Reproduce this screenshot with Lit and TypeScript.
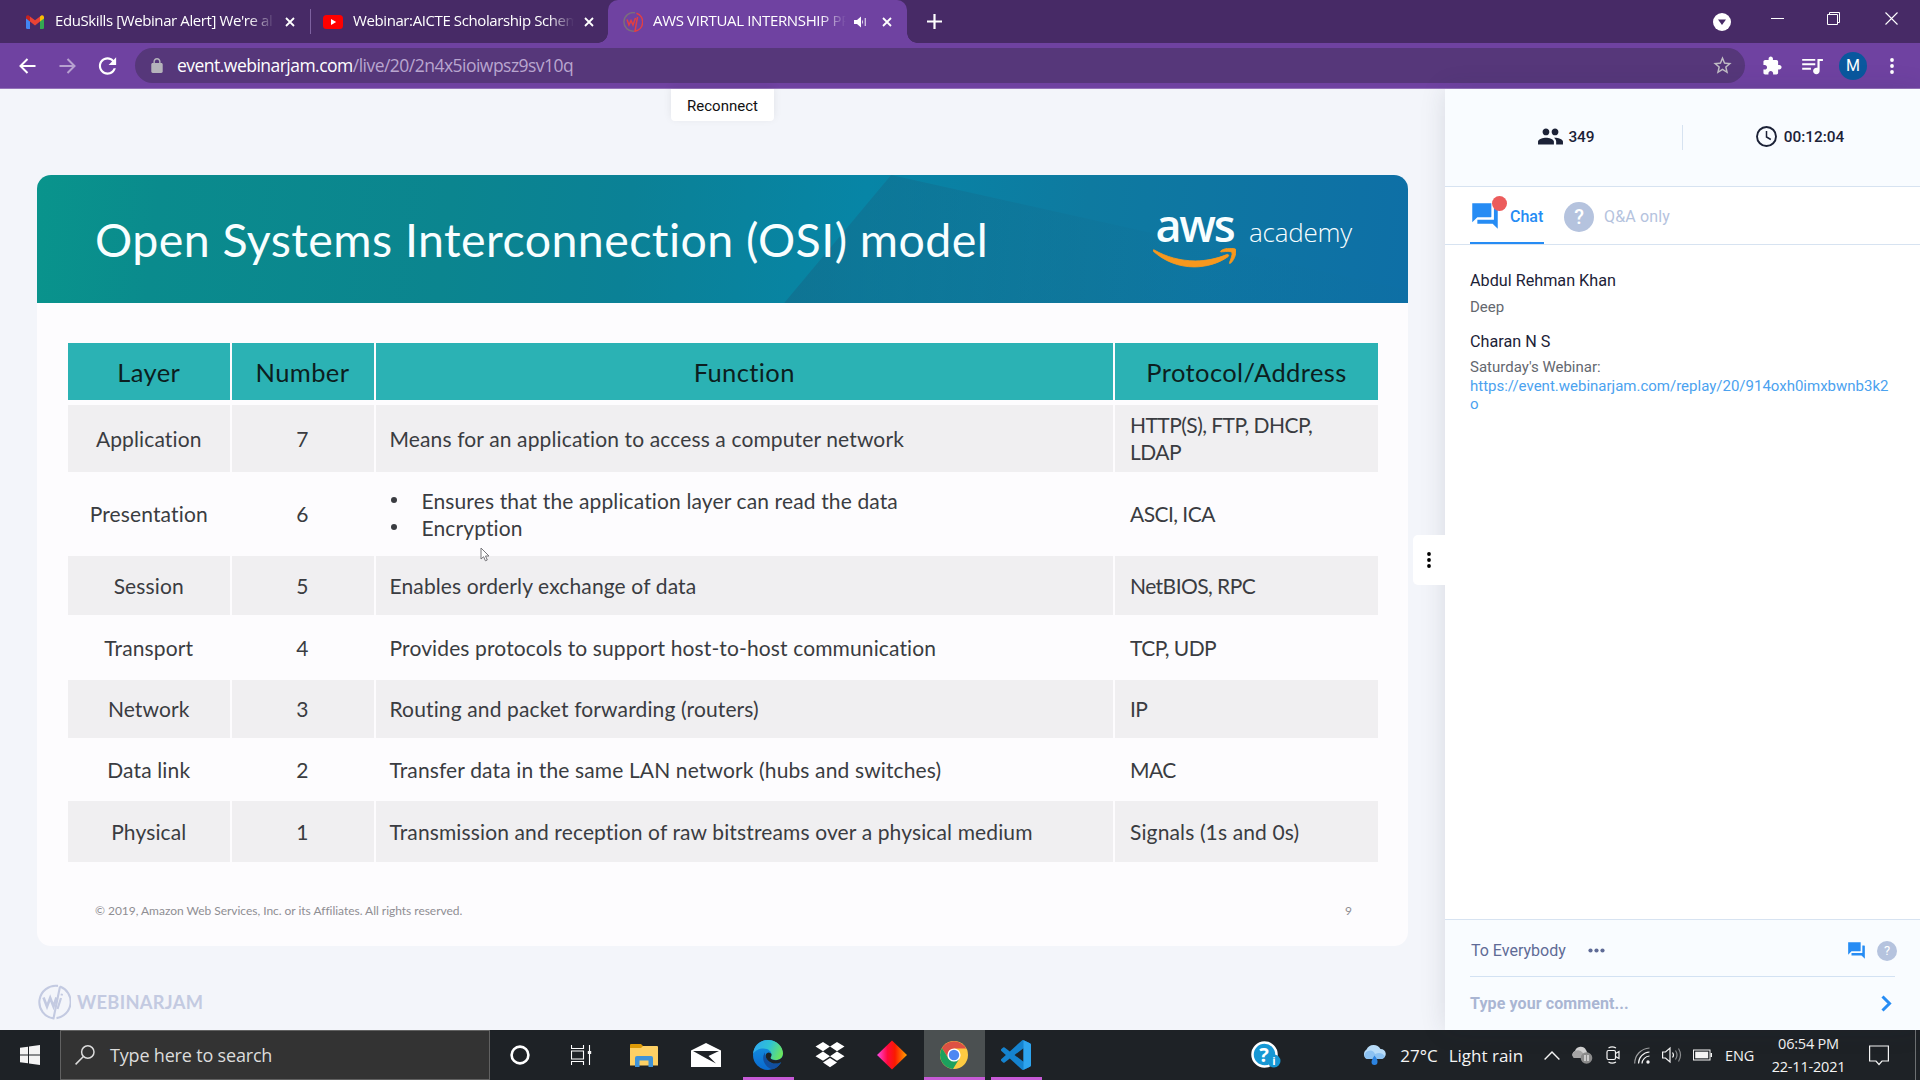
import { LitElement, html, svg, css, TemplateResult } from "lit";
import { customElement } from "lit/decorators.js";

const icon = (w: number, h: number, box: string, body: TemplateResult) =>
  html`<svg width=${w} height=${h} viewBox=${box} fill="currentColor">${body}</svg>`;

const CHAT = svg`<path d="M21.4 6H19v9H6v3h12l4 4V6.6zM17 12.6V2H2v15l4-4h10.6z"/>`;
const DOTS = svg`<circle cx="2" cy="2" r="1.9"/><circle cx="2" cy="8" r="1.9"/><circle cx="2" cy="14" r="1.9"/>`;
const CROSS = svg`<path d="M1 1L9 9M9 1L1 9" stroke="currentColor" stroke-width="1.8" fill="none"/>`;

@customElement("browser-chrome")
class BrowserChrome extends LitElement {
  static styles = css`
    :host { display: block; color: #fff; font-family: "Open Sans", "Noto Sans", sans-serif; }
    svg { display: block; flex: none; }
    .strip { display: flex; height: 43px; background: #472a66; align-items: center; }
    .tab { display: flex; align-items: center; height: 43px; font-size: 15px; letter-spacing: -0.4px; flex: none; box-sizing: border-box; }
    .tab .label { white-space: nowrap; overflow: hidden; line-height: 24px; margin-top: -4px;
      -webkit-mask-image: linear-gradient(90deg, #000 calc(100% - 26px), transparent); }
    .t1 { width: 310px; padding-left: 26px; }
    .t1 .label { width: 220px; margin-left: 11px; }
    .t2 { width: 298px; padding-left: 13px; }
    .t2 .label { width: 221px; margin-left: 10px; }
    .sep { width: 1px; height: 25px; background: #7e62a0; margin-right: -1px; }
    .x { margin-left: 10px; }
    .t3 { position: relative; width: 299px; background: #6f42a1; border-radius: 10px 10px 0 0; padding-left: 15px; letter-spacing: -0.34px; }
    .t3::before, .t3::after { content: ""; position: absolute; bottom: 0; width: 10px; height: 10px; }
    .t3::before { left: -10px; background: radial-gradient(circle at 0 0, transparent 9.5px, #6f42a1 10px); }
    .t3::after { right: -10px; background: radial-gradient(circle at 100% 0, transparent 9.5px, #6f42a1 10px); }
    .t3 .label { width: 193px; margin-left: 10px; }
    .t3 .snd { margin-left: 8px; }
    .t3 .x { margin-left: 15px; }
    .plus { margin-left: 20px; }
    .win { margin-left: auto; display: flex; align-items: center; height: 43px; padding-right: 22px; }
    .win .b { margin-left: 43px; margin-top: -6px; }
    .win .first { margin-left: 40px; }
    .win .last { margin-left: 45px; }
    .bar { display: flex; align-items: center; height: 45px; box-sizing: content-box; background: #6f42a1; border-bottom: 1px solid #9473b9; padding-left: 19px; }
    .fwd { margin-left: 23px; opacity: .5; }
    .rel { margin-left: 20px; }
    .omni { display: flex; align-items: center; width: 1610px; height: 35px; border-radius: 18px; background: #56377a; margin-left: 15px; box-sizing: border-box; padding: 0 12px 0 16px; flex: none; }
    .url { margin-left: 14px; font-size: 17.5px; letter-spacing: -0.52px; line-height: 30px; white-space: nowrap; margin-top: -1px; }
    .path { color: #b9a6cf; }
    .lock { color: #b5b3bb; }
    .star { margin-left: auto; color: #c0bdc4; }
    .ext { margin-left: 18px; }
    .queue { margin-left: 18px; }
    .me { width: 28px; height: 28px; border-radius: 50%; background: #0a589e; font: 400 16px/28px Roboto, sans-serif; text-align: center; margin-left: 15px; flex: none; }
    .more { margin-left: 23px; }
  `;
  render() {
    return html`
      <div class="strip">
        <div class="tab t1">
          ${icon(18, 14, "0 0 18 14", svg`<path d="M0 2.2V12.5Q0 14 1.3 14H4V5z" fill="#4285f4"/><path d="M18 2.2V12.5Q18 14 16.7 14H14V5z" fill="#34a853"/><path d="M4 1.4L9 5.2 14 1.4V6.6L9 10.4 4 6.6z" fill="#ea4335"/><path d="M0 2Q.2-.2 2.4.2L4 1.4V6.6L0 3.6z" fill="#c5221f"/><path d="M18 2Q17.8-.2 15.6.2L14 1.4V6.6L18 3.6z" fill="#fbbc04"/>`)}
          <span class="label">EduSkills [Webinar Alert] We're al</span>
          <span class="x">${icon(10, 10, "0 0 10 10", CROSS)}</span>
        </div>
        <div class="sep"></div>
        <div class="tab t2">
          ${icon(20, 14, "0 0 20 14", svg`<rect width="20" height="14" rx="3.5" fill="#f00"/><path d="M8 4L13.2 7 8 10z"/>`)}
          <span class="label">Webinar:AICTE Scholarship Schem</span>
          <span class="x">${icon(10, 10, "0 0 10 10", CROSS)}</span>
        </div>
        <div class="tab t3">
          ${icon(20, 20, "0 0 20 20", svg`<g fill="none" stroke-width="1.5"><path d="M12 .8A9.3 9.3 0 1 0 11 19.2" stroke="#7b6d7c"/><path d="M13.5 1.3A9.3 9.3 0 0 1 12 19.2L14.5 5" stroke="#e23f43"/><path d="M4 7.5L6 13 8 8.5 10 13 12.5 6" stroke="#e23f43"/></g>`)}
          <span class="label">AWS VIRTUAL INTERNSHIP PR</span>
          <span class="snd">${icon(13, 12, "0 0 13 12", svg`<path d="M0 4H3L7 .5V11.5L3 8H0z"/><path d="M8.2 3.5Q10 6 8.2 8.5z"/><path d="M11.3 2V10" stroke="currentColor" stroke-width="1.3" opacity=".7"/>`)}</span>
          <span class="x">${icon(10, 10, "0 0 10 10", CROSS)}</span>
        </div>
        <span class="plus">${icon(15, 15, "0 0 15 15", svg`<path d="M7.5 0V15M0 7.5H15" stroke="currentColor" stroke-width="2.2"/>`)}</span>
        <div class="win">
          ${icon(18, 18, "0 0 18 18", svg`<circle cx="9" cy="9" r="9"/><path d="M5 6.5H13L9 12z" fill="#472a66"/>`)}
          <span class="b first">${icon(13, 13, "0 0 13 13", svg`<path d="M0 6.5H13" stroke="currentColor"/>`)}</span>
          <span class="b">${icon(13, 13, "0 0 13 13", svg`<path d="M.5 2.5H10.5V12.5H.5zM2.5 2.5V.5H12.5V10.5H10.5" fill="none" stroke="currentColor"/>`)}</span>
          <span class="b last">${icon(13, 13, "0 0 13 13", svg`<path d="M.5 .5L12.5 12.5M12.5 .5L.5 12.5" stroke="currentColor" stroke-width="1.1"/>`)}</span>
        </div>
      </div>
      <div class="bar">
        ${icon(17, 16, "0 0 17 16", svg`<path d="M16.5 8H1.5M8.5 1L1.5 8 8.5 15" fill="none" stroke="currentColor" stroke-width="2"/>`)}
        <span class="fwd">${icon(17, 16, "0 0 17 16", svg`<path d="M.5 8H15.5M8.5 1L15.5 8 8.5 15" fill="none" stroke="currentColor" stroke-width="2"/>`)}</span>
        <span class="rel">${icon(24, 24, "0.5 0 24 24", svg`<path transform="translate(12 12) scale(1.08) translate(-12 -12)" d="M17.65 6.35C16.2 4.9 14.21 4 12 4c-4.42 0-7.99 3.58-7.99 8s3.57 8 7.99 8c3.73 0 6.84-2.55 7.73-6h-2.08c-.82 2.33-3.04 4-5.65 4-3.31 0-6-2.69-6-6s2.69-6 6-6c1.66 0 3.14.69 4.22 1.78L13 11h7V4l-2.35 2.35z"/>`)}</span>
        <div class="omni">
          <span class="lock">${icon(12, 15, "4 1 16 21", svg`<path d="M18 8h-1V6c0-2.76-2.24-5-5-5S7 3.24 7 6v2H6c-1.1 0-2 .9-2 2v10c0 1.1.9 2 2 2h12c1.1 0 2-.9 2-2V10c0-1.1-.9-2-2-2zM9 6c0-1.66 1.34-3 3-3s3 1.34 3 3v2H9z"/>`)}</span>
          <span class="url">event.webinarjam.com<span class="path">/live/20/2n4x5ioiwpsz9sv10q</span></span>
          <span class="star">${icon(21, 21, "0.5 0.5 23 23", svg`<path d="M22 9.24l-7.19-.62L12 2 9.19 8.63 2 9.24l5.46 4.73L5.82 21 12 17.27 18.18 21l-1.63-7.03L22 9.24zM12 15.4l-3.76 2.27 1-4.28-3.32-2.88 4.38-.38L12 6.1l1.71 4.04 4.38.38-3.32 2.88 1 4.28L12 15.4z"/>`)}</span>
        </div>
        <span class="ext">${icon(19, 19, "1.5 0.5 22 22", svg`<path d="M20.5 11H19V7c0-1.1-.9-2-2-2h-4V3.5C13 2.12 11.88 1 10.5 1S8 2.12 8 3.5V5H4c-1.1 0-1.99.9-1.99 2v3.8H3.5c1.49 0 2.7 1.21 2.7 2.7s-1.21 2.7-2.7 2.7H2V20c0 1.1.9 2 2 2h3.8v-1.5c0-1.49 1.21-2.7 2.7-2.7s2.7 1.21 2.7 2.7V22H17c1.1 0 2-.9 2-2v-4h1.5c1.38 0 2.5-1.12 2.5-2.5S21.88 11 20.5 11z"/>`)}</span>
        <span class="queue">${icon(24, 24, "1 1.5 22 22", svg`<path d="M15 6H3v1.8h12V6zm0 4H3v1.8h12v-1.8zM3 16h8v-1.8H3V16zM17 6v8.18c-.31-.11-.65-.18-1-.18-1.66 0-3 1.34-3 3s1.34 3 3 3 3-1.34 3-3V8h3V6h-5z"/>`)}</span>
        <div class="me">M</div>
        <span class="more">${icon(4, 16, "0 0 4 16", DOTS)}</span>
      </div>`;
  }
}

type Layer = { layer: string; n: number; fn: string | string[]; proto: string; size: string };
const LAYERS: Layer[] = [
  { layer: "Application", n: 7, fn: "Means for an application to access a computer network", proto: "HTTP(S), FTP, DHCP, LDAP", size: "h67" },
  { layer: "Presentation", n: 6, fn: ["Ensures that the application layer can read the data", "Encryption"], proto: "ASCI, ICA", size: "h84" },
  { layer: "Session", n: 5, fn: "Enables orderly exchange of data", proto: "NetBIOS, RPC", size: "h59" },
  { layer: "Transport", n: 4, fn: "Provides protocols to support host-to-host communication", proto: "TCP, UDP", size: "h65" },
  { layer: "Network", n: 3, fn: "Routing and packet forwarding (routers)", proto: "IP", size: "h58" },
  { layer: "Data link", n: 2, fn: "Transfer data in the same LAN network (hubs and switches)", proto: "MAC", size: "h63" },
  { layer: "Physical", n: 1, fn: "Transmission and reception of raw bitstreams over a physical medium", proto: "Signals (1s and 0s)", size: "h61" },
];

@customElement("slide-view")
class SlideView extends LitElement {
  static styles = css`
    :host { display: flex; flex-direction: column; position: relative; width: 1371px; height: 771px; border-radius: 14px; overflow: hidden; background: #fdfcfe; font-family: Lato, "Open Sans", sans-serif; color: #3a3c41; }
    .head { position: relative; height: 128px; display: flex; align-items: center; box-sizing: border-box; padding: 0 56px 0 58px; color: #f8feff; flex: none;
      background: linear-gradient(97deg, #09948c 0%, #0a8b8d 9%, #0b858f 30%, #0b8196 43%, #0785a6 60%, #0e7aa0 76%, #0e6fa6 100%); }
    .head::before { content: ""; position: absolute; inset: 0; clip-path: polygon(62.3% 0, 100% 90%, 100% 100%, 54.5% 100%); background: linear-gradient(90deg, rgba(18,108,140,.65) 55%, rgba(16,112,155,.1) 85%); }
    .head > * { position: relative; }
    .title { font-size: 46.5px; letter-spacing: 0.43px; white-space: nowrap; line-height: 60px; }
    .aws { margin: -9px 0 0 auto; display: flex; gap: 13px; }
    .mark { display: flex; flex-direction: column; width: 83px; align-items: center; }
    .word { font: 600 45px/46px "Open Sans", sans-serif; height: 46px; letter-spacing: -2.2px; }
    .smile { display: block; color: #f7981d; }
    .smile svg { display: block; }
    .acad { font: 300 26px/36px "Open Sans", sans-serif; letter-spacing: -0.25px; width: 103px; margin-top: 12px; }
    .table { margin: 40px 30px 0 31px; display: flex; flex-direction: column; }
    .row { display: grid; grid-template-columns: 161.5px 142px 737.5px 263px; gap: 2px; font-size: 21px; letter-spacing: 0.13px; line-height: 27px; }
    .row > div { display: flex; align-items: center; justify-content: center; padding-bottom: 1px; box-sizing: border-box; }
    .row:nth-child(even) > div { background: #f0eff1; }
    .row > .l { justify-content: flex-start; padding: 0 30px 1px 15px; }
    .row > .fn { padding-left: 14px; }
    .row > .caps { letter-spacing: -0.55px; }
    .th { height: 57px; font-size: 25.5px; letter-spacing: 0.4px; margin-bottom: 5px; color: #0c1e20; }
    .row.th > div { background: #2bb2b4; padding: 2px 0 0; }
    .h67 { height: 67px; } .h84 { height: 84px; } .h59 { height: 59px; } .h65 { height: 65px; }
    .h58 { height: 58px; } .h63 { height: 63px; } .h61 { height: 61px; }
    ul { margin: 0; padding: 0; list-style: none; }
    li { display: flex; align-items: center; }
    li::before { content: ""; width: 6px; height: 6px; border-radius: 50%; background: #3a3c41; margin: 0 25px 0 1px; }
    .foot { display: flex; justify-content: space-between; font-size: 12px; padding: 40px 56px 0 58px; color: #8f8e93; line-height: 18px; letter-spacing: -0.03px; }
    .cursor { position: absolute; left: 443px; top: 371px; }
  `;
  render() {
    return html`
      <div class="head">
        <span class="title">Open Systems Interconnection (OSI) model</span>
        <div class="aws">
          <div class="mark"><span class="word">aws</span>
            <span class="smile">${icon(83, 20, "0 13.8 24 5.6", svg`<path d="M21.698 16.207c-2.626 1.94-6.442 2.969-9.722 2.969-4.598 0-8.74-1.7-11.87-4.526-.247-.223-.024-.527.272-.351 3.384 1.963 7.559 3.153 11.877 3.153 2.914 0 6.114-.607 9.06-1.852.439-.2.814.287.383.607zM22.792 14.961c-.336-.43-2.22-.207-3.074-.103-.255.032-.295-.192-.063-.36 1.5-1.053 3.967-.75 4.254-.399.287.36-.08 2.826-1.485 4.007-.215.184-.423.088-.327-.151.32-.79 1.03-2.57.695-2.994z" stroke="currentColor" stroke-width=".25"/>`)}</span>
          </div>
          <span class="acad">academy</span>
        </div>
      </div>
      <div class="table">
        <div class="row th"><div>Layer</div><div>Number</div><div>Function</div><div>Protocol/Address</div></div>
        ${LAYERS.map((r) => html`<div class="row ${r.size}">
          <div>${r.layer}</div><div>${r.n}</div>
          <div class="l fn">${typeof r.fn === "string" ? r.fn : html`<ul>${r.fn.map((t) => html`<li>${t}</li>`)}</ul>`}</div>
          <div class="l ${/[A-Z]{2}/.test(r.proto) ? "caps" : ""}">${r.proto}</div></div>`)}
      </div>
      <div class="foot"><span>© 2019, Amazon Web Services, Inc. or its Affiliates. All rights reserved.</span><span>9</span></div>
      <span class="cursor">${icon(10, 15, "0 0 10 15", svg`<path d="M1 1V12L3.6 9.7 5.4 13.8 7.3 13 5.5 9H9z" fill="#fff" stroke="#77767b"/>`)}</span>`;
  }
}

@customElement("chat-panel")
class ChatPanel extends LitElement {
  static styles = css`
    :host { position: relative; display: flex; flex-direction: column; width: 475px; height: 941px; background: #fff; font-family: Roboto, sans-serif; color: #1c2237; box-shadow: 0 0 24px rgba(40,45,70,.13); }
    svg { display: block; }
    .stats { height: 97px; box-sizing: content-box; background: #f9fcff; border-bottom: 1px solid #d7e3f1; display: flex; align-items: center; font-size: 15.4px; font-weight: 500; line-height: 20px; flex: none; }
    .stats .c { display: flex; align-items: center; justify-content: center; height: 25px; box-sizing: border-box; padding-bottom: 2px; }
    .stats .viewers { width: 238px; gap: 5px; border-right: 1px solid #d7e3f1; padding-left: 6px; }
    .stats .clock { width: 234px; gap: 7px; }
    .tabs { display: flex; height: 57px; border-bottom: 1px solid #d7e3f1; padding-left: 25px; font-size: 16px; flex: none; }
    .tab { display: flex; align-items: center; position: relative; }
    .on { color: #268cf4; width: 74px; box-sizing: border-box; padding: 3px 0 0 2px; border-bottom: 2px solid #268cf4; font-weight: 500; }
    .on span { margin-left: 12px; }
    .dot { position: absolute; left: 22px; top: 9px; width: 15px; height: 15px; border-radius: 50%; background: #ec5c5c; }
    .off { color: #b5c3de; margin-left: 20px; gap: 10px; padding-top: 2px; letter-spacing: 0.15px; }
    .q { border-radius: 50%; background: #b5c3de; color: #fff; text-align: center; font-weight: 500; letter-spacing: 0; }
    .q.big { width: 30px; height: 30px; font-size: 20px; line-height: 30px; }
    .q.small { width: 20px; height: 20px; font-size: 13px; line-height: 20px; font-weight: 400; }
    .list { flex: 1; padding: 24px 25px 0; }
    .name { font-size: 16.2px; line-height: 24px; }
    .msg { font-size: 15px; line-height: 18.4px; color: #64686f; margin: 3.5px 0 14px; padding-top: 1px; overflow-wrap: anywhere; }
    .msg a { color: #4ba2ef; }
    .foot { height: 111px; background: #f9fcff; border-top: 1px solid #d7e3f1; padding: 0 25px; box-sizing: border-box; flex: none; }
    .to { display: flex; align-items: center; height: 57px; padding: 5px 0 0 1px; box-sizing: border-box; border-bottom: 1px solid #d3e2f3; font-size: 16px; color: #5f6b96; }
    .to .d { margin-left: 22px; }
    .to .ic { margin-left: auto; color: #268cf4; margin-right: 12px; }
    .to .q { margin-right: -2px; }
    .say { display: flex; align-items: center; justify-content: space-between; height: 53px; font-size: 16px; font-weight: 700; color: #aab6d3; padding-right: 3px; letter-spacing: 0.1px; }
    .say .go { color: #268cf4; }
    .grip { position: absolute; left: -32px; top: 446px; width: 32px; height: 50px; background: #fff; border-radius: 5px 0 0 5px; display: flex; align-items: center; justify-content: center; color: #000; }
  `;
  render() {
    return html`
      <div class="stats">
        <div class="c viewers">${icon(25, 17, "1 4.5 22 15", svg`<path d="M16 11c1.66 0 2.99-1.34 2.99-3S17.66 5 16 5s-3 1.34-3 3 1.34 3 3 3zm-8 0c1.66 0 2.99-1.34 2.99-3S9.66 5 8 5 5 6.34 5 8s1.34 3 3 3zm0 2c-2.33 0-7 1.17-7 3.5V19h14v-2.5c0-2.33-4.67-3.5-7-3.5zm8 0c-.29 0-.62.02-.97.05 1.16.84 1.97 1.97 1.97 3.45V19h6v-2.5c0-2.33-4.67-3.5-7-3.5z"/>`)}<span>349</span></div>
        <div class="c clock">${icon(21, 21, "0 0 21 21", svg`<g fill="none" stroke="currentColor"><circle cx="10.5" cy="10.5" r="9.5" stroke-width="1.9"/><path d="M10.5 5V11L14.8 13.5" stroke-width="1.5"/></g>`)}<span>00:12:04</span></div>
      </div>
      <div class="tabs">
        <div class="tab on">${icon(26, 26, "1.8 1.8 20.4 20.4", CHAT)}<i class="dot"></i><span>Chat</span></div>
        <div class="tab off"><div class="q big">?</div><span>Q&amp;A only</span></div>
      </div>
      <div class="list">
        <div class="name">Abdul Rehman Khan</div>
        <div class="msg">Deep</div>
        <div class="name">Charan N S</div>
        <div class="msg">Saturday's Webinar:<br /><a>https://event.webinarjam.com/replay/20/914oxh0imxbwnb3k2o</a></div>
      </div>
      <div class="foot">
        <div class="to"><span>To Everybody</span><span class="d">${icon(17, 5, "0 0 17 5", svg`<circle cx="2.5" cy="2.5" r="2.1"/><circle cx="8.5" cy="2.5" r="2.1"/><circle cx="14.5" cy="2.5" r="2.1"/>`)}</span>
          <span class="ic">${icon(17, 17, "1.8 1.8 20.4 20.4", CHAT)}</span><div class="q small">?</div></div>
        <div class="say"><span>Type your comment...</span><span class="go">${icon(11, 17, "0 0 11 17", svg`<path d="M1.5 1.5L8.5 8.5 1.5 15.5" fill="none" stroke="currentColor" stroke-width="3"/>`)}</span></div>
      </div>
      <div class="grip">${icon(4, 16, "0 0 4 16", DOTS)}</div>`;
  }
}

@customElement("task-bar")
class TaskBar extends LitElement {
  static styles = css`
    :host { display: flex; height: 50px; background: #1e2226; color: #f4f4f4; font-family: "Open Sans", "Noto Sans", sans-serif; }
    svg { display: block; }
    .start { width: 60px; display: flex; align-items: center; justify-content: center; }
    .search { width: 430px; box-sizing: border-box; border: 1px solid #616161; background: #333; display: flex; align-items: center; padding-left: 14px; gap: 15px; font-size: 18px; letter-spacing: -0.18px; color: #dcdcdc; }
    .app { display: flex; align-items: center; justify-content: center; width: 61px; position: relative; margin-right: 1px; padding-right: 2px; box-sizing: border-box; }
    .run::after { content: ""; position: absolute; left: 5px; right: 5px; bottom: 0; height: 3px; background: #c65ad6; }
    .active { background: #4b5051; padding-right: 1px; }
    .run.active::after { left: 0; right: 0; }
    .tray { margin-left: auto; display: flex; align-items: center; padding-right: 4px; height: 50px; font-size: 17px; white-space: nowrap; }
    .w { margin-left: 80px; display: flex; align-items: center; }
    .w .a { margin-left: 13px; } .w .b { margin-left: 11px; }
    .up { margin-left: 21px; } .od { margin-left: 11px; } .meet { margin-left: 13px; } .wifi { margin-left: 14px; } .vol { margin-left: 12px; } .bat { margin-left: 11px; }
    .eng { font-size: 14.5px; letter-spacing: -0.2px; margin-left: 13px; }
    .time { margin-left: 16px; width: 77px; text-align: center; font-size: 14.5px; letter-spacing: -0.2px; line-height: 23px; }
    .note { margin-left: 22px; }
    .edge { margin-left: 26px; width: 1px; height: 50px; background: #6d7072; }
  `;
  render() {
    return html`
      <div class="start">${icon(20, 20, "0 0 20 20", svg`<path d="M0 2.8L8 1.7V9.5H0zM9 1.5L20 0V9.5H9zM0 10.5H8V18.3L0 17.2zM9 10.5H20V20L9 18.5z"/>`)}</div>
      <div class="search">${icon(20, 20, "0 0 20 20", svg`<g fill="none" stroke="currentColor" stroke-width="1.5"><circle cx="12.8" cy="7" r="6.2"/><path d="M8.4 11.5L.6 19.4"/></g>`)}<span>Type here to search</span></div>
      <div class="app">${icon(20, 20, "0 0 20 20", svg`<circle cx="10" cy="10" r="8.4" fill="none" stroke="#fff" stroke-width="2.6"/>`)}</div>
      <div class="app">${icon(21, 20, "0 0 21 20", svg`<g fill="none" stroke="#fff" stroke-width="1.1"><path d="M.5 0V3.5H12.5V0M.5 6H12.5V14H.5zM.5 20V16.5H12.5V20M18.5 0V20"/></g><path d="M16.8 6H20.2V9H16.8z"/>`)}</div>
      <div class="app">${icon(28, 23, "0 0 28 23", svg`<path d="M0 1Q0 0 1 0H11L13 2V5H0z" fill="#dd9a06"/><path d="M0 4H11L13 2H27Q28 2 28 3V21.5H0z" fill="#fdd064"/><path d="M5 23V14Q5 12 7 12H21Q23 12 23 14V23H18.5V16.5H9.5V23z" fill="#3f93d8"/>`)}</div>
      <div class="app">${icon(30, 24, "0 0 30 24", svg`<path d="M0 7.5L15 0 30 7.5V24H0z" fill="#fff"/><path d="M2 8H28L17.5 13 25 20.5 15.5 15.5z" fill="#1e2226"/>`)}</div>
      <div class="app run">${icon(30, 30, "0 0 30 30", svg`<defs><linearGradient id="ea" x1="0" y1=".3" x2="1" y2=".6"><stop offset="0" stop-color="#2fa7f0"/><stop offset=".5" stop-color="#2fc3d4"/><stop offset="1" stop-color="#6ee65a"/></linearGradient><linearGradient id="eb" x1="0" y1="0" x2="0" y2="1"><stop offset="0" stop-color="#1593e0"/><stop offset="1" stop-color="#0a6ad0"/></linearGradient></defs><circle cx="15" cy="15" r="15" fill="url(#eb)"/><path d="M0 14C1 5 7 0 15 0 24 0 30 6.5 30 13.5 30 18 26.5 20 23 20 20 20 17.5 19 17.5 18 17.5 17 18.5 16.5 18.5 14.5 18.5 11.5 15.5 8.5 10.5 8.5 6 8.5 2 10.5 0 14z" fill="url(#ea)"/><path d="M12 12.5C10 15 9.5 19 11.5 23 13.5 27 18 29.5 20 29.2 23.5 28 26 26 28 22.5 24 24.5 18 24 15 20.5 12.5 18 11.5 15 12 12.5z" fill="#124f9f"/><path d="M17.5 18C17.5 19 20 20.2 23 20.2 26.5 20.2 30 18 30 14L32 14V22L28.2 22.3C24 24.5 18 24 15 20.5 11.5 17 12 13.5 15.5 12.5 17 12.5 18.5 13.5 18.5 14.5 18.5 16.5 17.5 17 17.5 18z" fill="#1e2226"/>`)}</div>
      <div class="app">${icon(30, 26, "0 0 30 26", svg`<path d="M8 0L15 4.6 8 9.2 .5 4.6zM22 0L29.5 4.6 22 9.2 15 4.6zM8 9.6L15 14.2 8 18.8 .5 14.2zM22 9.6L29.5 14.2 22 18.8 15 14.2zM15 16L22 20.6 15 25.3 8 20.6z" fill="#fff"/>`)}</div>
      <div class="app">${icon(30, 30, "0 0 30 30", svg`<defs><linearGradient id="dm"><stop offset=".05" stop-color="#ff3fd0"/><stop offset=".35" stop-color="#ff0a3c"/><stop offset=".6" stop-color="#fa1a00"/><stop offset="1" stop-color="#ffa400"/></linearGradient></defs><path d="M15 .5L30 15 15 29.5 0 15z" fill="url(#dm)"/>`)}</div>
      <div class="app run active">${icon(28, 28, "0 0 28 28", svg`<circle cx="14" cy="14" r="14" fill="#fdca42"/><path d="M1.9 7A14 14 0 0 1 26.1 7.5H14L8.4 17.2z" fill="#dd5144"/><path d="M1.9 7A14 14 0 0 0 13 28L19.6 17.2 14 20.5 8.4 17.2z" fill="#1da15e"/><circle cx="14" cy="14" r="6.6" fill="#fff"/><circle cx="14" cy="14" r="5.2" fill="#4d88f2"/>`)}</div>
      <div class="app run">${icon(30, 30, "0 0 24 24", svg`<path d="M23.15 2.587L18.21.21a1.494 1.494 0 0 0-1.705.29l-9.46 8.63-4.12-3.128a.999.999 0 0 0-1.276.057L.327 7.261A1 1 0 0 0 .326 8.74L3.899 12 .326 15.26a1 1 0 0 0 .001 1.479L1.65 17.94a.999.999 0 0 0 1.276.057l4.12-3.128 9.46 8.63a1.492 1.492 0 0 0 1.704.29l4.942-2.377A1.5 1.5 0 0 0 24 20.06V3.939a1.5 1.5 0 0 0-.85-1.352zm-5.146 14.861L10.826 12l7.178-5.448v10.896z" fill="#1583cf"/><path d="M18 .2L23.15 2.59Q24 3 24 3.94V20.06Q24 21 23.15 21.4L18 23.8z" fill="#2ea4ee"/>`)}</div>
      <div class="tray">
        ${icon(30, 30, "0 0 30 30", svg`<circle cx="13.5" cy="14.5" r="12" fill="#1697d4" stroke="#fff" stroke-width="2.5"/><text x="13" y="21.5" font-size="20" font-weight="700" text-anchor="middle" fill="#fff">?</text><circle cx="23" cy="21" r="6.5" fill="#1697d4"/><text x="23" y="25" font-size="11" font-weight="700" text-anchor="middle" fill="#fff">i</text>`)}
        <div class="w">${icon(26, 20, "0 0 26 20", svg`<path d="M6 14A5.5 5.5 0 0 1 5.5 4.5 8 8 0 0 1 19.5 4 5 5 0 0 1 20 14z" fill="#b8dcf8"/><path d="M4 13A5 5 0 0 1 7 6Q12 4 14 9 20 6 24 11 23 14 20 14H6z" fill="#8cc2f2"/><path d="M13.5 10.5Q17 15 16.5 17A3 3 0 0 1 10.5 17Q10.5 15 13.5 10.5z" fill="#2c83e0"/>`)}<span class="a">27°C</span><span class="b">Light rain</span></div>
        <span class="up">${icon(16, 9, "0 0 16 9", svg`<path d="M.6 8.4L8 1 15.4 8.4" fill="none" stroke="currentColor" stroke-width="1.4"/>`)}</span>
        <span class="od">${icon(22, 18, "0 0 22 18", svg`<path d="M3 12A4 4 0 0 1 4 5 6 6 0 0 1 15 4L17 8V12z" fill="#d0d0d0"/><path d="M4 5Q9 3 12 7L17 12H3A4 4 0 0 1 4 5z" fill="#a5a5a5"/><circle cx="15.5" cy="12" r="5.8" fill="#8b8b8b"/><path d="M14 9V15M17 9V15" stroke="#fff" stroke-width="1.1"/>`)}</span>
        <span class="meet">${icon(14, 18, "0 0 14 18", svg`<g fill="none" stroke="currentColor" stroke-width="1.2"><rect x="1" y="4.5" width="8.5" height="9" rx="1.5"/><path d="M9.5 7.5L13 5.5V12.5L9.5 10.5M2.5 2Q6 -.2 10 2M2.5 16Q6 18.2 10 16"/></g>`)}</span>
        <span class="wifi">${icon(16, 17, "0 0 16 17", svg`<g fill="none" stroke="currentColor" stroke-width="1.2"><path d="M.7 16.5A15.5 15.5 0 0 1 15.5 1" opacity=".6"/><path d="M4.5 16.5A11.5 11.5 0 0 1 15.5 5M8 16.5A8 8 0 0 1 15.5 9"/></g><circle cx="14" cy="15" r="1.7"/>`)}</span>
        <span class="vol">${icon(20, 18, "0 0 20 18", svg`<g fill="none" stroke="currentColor" stroke-width="1.2"><path d="M.6 6H3.5L8 2V16L3.5 12H.6z"/><path d="M10.5 6.5Q12.5 9 10.5 11.5"/><path d="M13.5 4.5Q16.5 9 13.5 13.5M16.5 2.5Q20.5 9 16.5 15.5" opacity=".5"/></g>`)}</span>
        <span class="bat">${icon(19, 12, "0 0 19 12", svg`<rect x=".5" y="1" width="16.5" height="10" fill="none" stroke="currentColor"/><rect x="2.2" y="2.7" width="13" height="6.6"/><path d="M17.5 4H19V8H17.5z"/>`)}</span>
        <span class="eng">ENG</span>
        <div class="time">06:54 PM<br />22-11-2021</div>
        <span class="note">${icon(20, 21, "0 0 20 21", svg`<path d="M.6 1H19.4V16H13L10 19.5 7 16H.6z" fill="none" stroke="currentColor" stroke-width="1.2"/>`)}</span>
        <span class="edge"></span>
      </div>`;
  }
}

@customElement("app-root")
class AppRoot extends LitElement {
  static styles = css`
    :host { display: flex; flex-direction: column; width: 1920px; height: 1080px; overflow: hidden; }
    .main { display: flex; height: 941px; background: #f3f5fa; }
    .stage { flex: 1; display: flex; flex-direction: column; padding-left: 37px; }
    .re { align-self: flex-start; margin-left: 634px; width: 103px; height: 32px; border-radius: 0 0 4px 4px; background: #fff; font: 15px/34px Roboto, sans-serif; text-align: center; color: #111; box-shadow: 0 -2px 8px rgba(0,0,0,.08); margin-bottom: 54px; }
    .logo { display: flex; align-items: center; gap: 6px; margin: 38px 0 0 -1px; color: #c3cae1; font: 700 18.3px/36px Lato, sans-serif; letter-spacing: 0.3px; }
    .logo svg { display: block; }
  `;
  render() {
    return html`<browser-chrome></browser-chrome>
      <div class="main">
        <div class="stage">
          <div class="re">Reconnect</div>
          <slide-view></slide-view>
          <div class="logo">${icon(35, 36, "0 0 35 36", svg`<g fill="none" stroke="currentColor"><path d="M22 1.9A16.4 16.4 0 1 0 17.5 34.4L24 2.5" stroke-width="2.1"/><path d="M24 2.5A16.4 16.4 0 0 1 20.5 34.1" stroke-width="2.1"/><path d="M7.5 13.5L11 22.5 14.2 14 17.5 22.5 20.5 13.5" stroke-width="2.6"/><path d="M25 14L21.5 25M26 9.8L25.5 11.5" stroke-width="2.2"/></g>`)}<span>WEBINARJAM</span></div>
        </div>
        <chat-panel></chat-panel>
      </div>
      <task-bar></task-bar>`;
  }
}
